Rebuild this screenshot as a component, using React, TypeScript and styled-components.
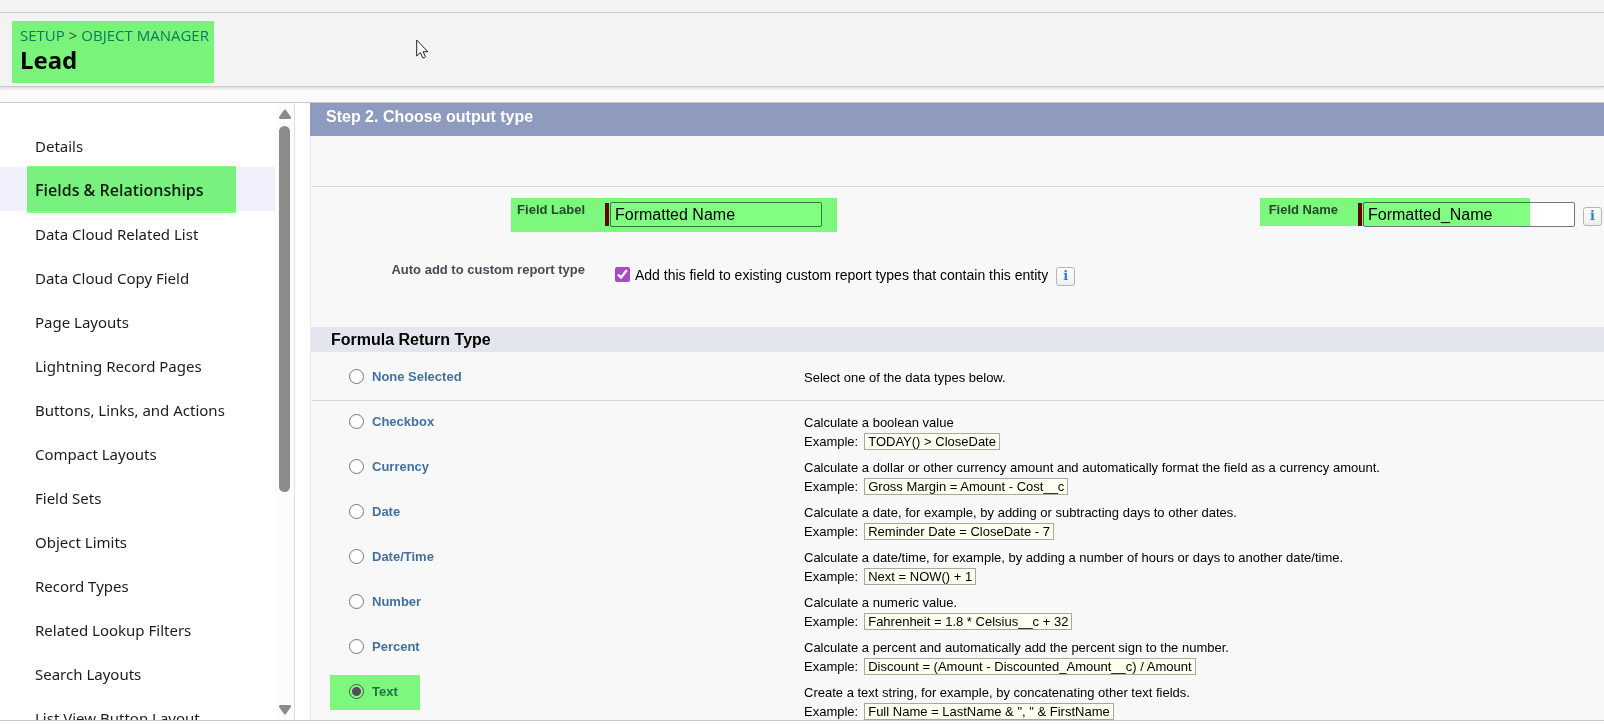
import React from "react";
import styled, { createGlobalStyle, css } from "styled-components";

const GlobalStyle = createGlobalStyle`
  *, *::before, *::after { box-sizing: border-box; }
  html, body, #root { height: 100%; }
  body { margin: 0; background: #fff; font-family: "Liberation Sans", Arial, sans-serif; color: #000; }
`;

const uiFont = `"Noto Sans", "Segoe UI", sans-serif`;
const marker = "#80ff80";

/* Translucent marker strip laid over a part of the page. */
const Marker = styled.span<{ $top: number; $right: number; $bottom: number; $left: number }>`
  position: absolute;
  top: ${(p) => -p.$top}px;
  right: ${(p) => -p.$right}px;
  bottom: ${(p) => -p.$bottom}px;
  left: ${(p) => -p.$left}px;
  background: ${marker};
  mix-blend-mode: multiply;
  pointer-events: none;
`;

const Page = styled.div`
  display: flex;
  flex-direction: column;
  height: 100vh;
  padding-bottom: 3px;
  background: #fff;
`;

const TopStrip = styled.div`
  flex: none;
  height: 12px;
  background: #f3f3f3;
`;

const Header = styled.header`
  position: relative;
  flex: none;
  padding: 8px 12px 3px;
  border: solid #c9c9c9;
  border-width: 1px 0;
  background: #f3f3f3;
  box-shadow: 0 2px 2px rgba(0, 0, 0, 0.1);
  font-family: ${uiFont};
`;

const TitleBlock = styled.div`
  position: relative;
  width: fit-content;
  padding: 4px 5px 8px 8px;
`;

const Breadcrumb = styled.nav`
  display: flex;
  gap: 4px;
  font-family: "Open Sans", "Segoe UI", sans-serif;
  font-size: 15px;
  line-height: 20px;
  color: #555;
  a { color: #0b7cba; text-decoration: none; }
`;

const Title = styled.h1`
  margin: 0;
  font-size: 24px;
  line-height: 30px;
  font-weight: 700;
  color: #080707;
`;

const Pointer = styled.svg`
  position: absolute;
  left: 416px;
  top: 26px;
  width: 13px;
  height: 20px;
`;

const Gap = styled.div`
  flex: none;
  height: 15px;
  background: #fafafa;
`;

const Workspace = styled.div`
  flex: 1;
  min-height: 0;
  display: flex;
  border: solid #c9c9c9;
  border-width: 1px 0;
`;

const Sidebar = styled.aside`
  flex: none;
  width: 295px;
  display: flex;
  overflow: hidden;
  border-right: 1px solid #e0e0e0;
  font-family: ${uiFont};
`;

const SideList = styled.ul`
  flex: 1;
  margin: 0;
  padding: 20px 0 0;
  list-style: none;
`;

const SideItem = styled.li<{ $active?: boolean }>`
  height: 44px;
  padding-left: 35px;
  font-size: 15px;
  line-height: 46px;
  ${(p) => p.$active && css`
    background: #f0f1fd;
    font-family: "Open Sans", "Segoe UI", sans-serif;
    font-size: 16px;
    font-weight: 600;
  `}
`;

const SideLink = styled.a`
  position: relative;
  display: inline-block;
  height: 44px;
  color: #1c1c1c;
  text-decoration: none;
  white-space: nowrap;
`;

const Scrollbar = styled.div`
  flex: none;
  width: 19px;
  padding: 6px 3px 5px 4px;
  display: flex;
  flex-direction: column;
  background: #fcfcfc;
  svg { flex: none; width: 12px; height: 10px; fill: #8b8b8b; }
`;

const Track = styled.div`
  flex: 1;
  padding: 7px 1px 7px 0;
`;

const Thumb = styled.div`
  height: 64%;
  border-radius: 6px;
  background: #8b8b8b;
`;

const Content = styled.main`
  flex: 1;
  min-width: 0;
  margin-left: 15px;
  overflow: hidden;
`;

const StepBar = styled.h2`
  margin: 0;
  height: 33px;
  padding-left: 16px;
  background: #8e9bbe;
  color: #fff;
  font-size: 16px;
  line-height: 28px;
`;

const StepBody = styled.div`
  min-height: 100%;
  border-left: 1px solid #eaeaea;
  background: #f8f8f8;
`;

const ButtonRow = styled.div`
  height: 51px;
  margin-left: 1px;
  border-bottom: 1px solid #d9d9d9;
`;

const FormGrid = styled.div`
  display: grid;
  grid-template-columns: 274px 1fr 274px 266px;
  row-gap: 35px;
  padding: 15px 0 40px;
`;

const FieldName = styled.label`
  text-align: right;
  font-size: 13px;
  line-height: 16px;
  font-weight: 700;
  color: #4a4a56;
  white-space: nowrap;
`;

const FieldCell = styled.div<{ $wide?: boolean }>`
  display: flex;
  align-items: center;
  height: 25px;
  padding-left: 20px;
  font-size: 14px;
  white-space: nowrap;
  ${(p) => p.$wide && css`grid-column: 2 / -1;`}
`;

const LabelText = styled.span`
  position: relative;
`;

const Required = styled.span`
  width: 4px;
  height: 23px;
  margin-right: 1px;
  background: #c00;
`;

const TextBox = styled.input`
  width: 212px;
  height: 25px;
  padding: 0 0 0 4px;
  border: 1px solid #767676;
  border-radius: 2px;
  background: #fff;
  color: #000;
  font: 16px/20px "Liberation Sans", Arial, sans-serif;
`;

const CheckLabel = styled.label`
  display: flex;
  align-items: center;
  gap: 5px;
  padding-left: 10px;
`;

const CheckBox = styled.input`
  width: 15px;
  height: 15px;
  margin: 0;
  accent-color: #a84bc0;
`;

const InfoButton = styled.button`
  flex: none;
  width: 19px;
  height: 19px;
  margin: 3px 0 0 8px;
  padding: 0;
  border: 1px solid #b5b5b5;
  border-radius: 3px;
  background: linear-gradient(#fff, #eee);
  color: #2a7fd6;
  font: 700 13px/16px "DejaVu Serif", serif;
`;

const SectionBand = styled.h3`
  margin: 0;
  height: 25px;
  padding-left: 20px;
  background: #e3e6ef;
  font-size: 16px;
  line-height: 25px;
`;

const Options = styled.div`
  padding-top: 12px;
`;

const Option = styled.div<{ $divided?: boolean }>`
  display: grid;
  grid-template-columns: 493px 1fr;
  height: ${(p) => (p.$divided ? 36 : 45)}px;
`;

const Divider = styled.hr`
  height: 1px;
  margin: 0 0 8px 1px;
  border: 0;
  background: #d9d9d9;
`;

const Choice = styled.div`
  padding: 3px 0 0 38px;
`;

const ChoiceLabel = styled.label`
  position: relative;
  display: inline-flex;
  align-items: center;
  gap: 8px;
  height: 18px;
  font-size: 13px;
  font-weight: 700;
  color: #44709f;
`;

const Radio = styled.input`
  appearance: none;
  width: 15px;
  height: 15px;
  margin: 0;
  border: 1px solid #767676;
  border-radius: 50%;
  background: #fff;
  &:checked {
    border-color: #a84bc0;
    background: radial-gradient(circle, #a84bc0 4px, #fff 5px);
  }
`;

const Description = styled.div`
  padding-top: 4px;
  font-size: 13px;
  line-height: 19px;
  white-space: nowrap;
`;

const Example = styled.div`
  display: flex;
  align-items: center;
  gap: 6px;
  height: 19px;
`;

const Formula = styled.code`
  height: 17px;
  padding: 0 3px;
  border: 1px solid #a8a8a0;
  background: #fffff0;
  font: 13px/15px "Liberation Sans", Arial, sans-serif;
`;

const sideItems = [
  "Details", "Fields & Relationships", "Data Cloud Related List", "Data Cloud Copy Field",
  "Page Layouts", "Lightning Record Pages", "Buttons, Links, and Actions", "Compact Layouts",
  "Field Sets", "Object Limits", "Record Types", "Related Lookup Filters", "Search Layouts",
  "List View Button Layout",
];

const options: { name: string; text: string; example?: string }[] = [
  { name: "None Selected", text: "Select one of the data types below." },
  { name: "Checkbox", text: "Calculate a boolean value", example: "TODAY() > CloseDate" },
  { name: "Currency", text: "Calculate a dollar or other currency amount and automatically format the field as a currency amount.", example: "Gross Margin = Amount - Cost__c" },
  { name: "Date", text: "Calculate a date, for example, by adding or subtracting days to other dates.", example: "Reminder Date = CloseDate - 7" },
  { name: "Date/Time", text: "Calculate a date/time, for example, by adding a number of hours or days to another date/time.", example: "Next = NOW() + 1" },
  { name: "Number", text: "Calculate a numeric value.", example: "Fahrenheit = 1.8 * Celsius__c + 32" },
  { name: "Percent", text: "Calculate a percent and automatically add the percent sign to the number.", example: "Discount = (Amount - Discounted_Amount__c) / Amount" },
  { name: "Text", text: "Create a text string, for example, by concatenating other text fields.", example: 'Full Name = LastName & ", " & FirstName' },
];

export default function App() {
  return (
    <Page>
      <GlobalStyle />
      <TopStrip />
      <Header>
        <TitleBlock>
          <Breadcrumb>
            <a href="#setup">SETUP</a>
            <span>&gt;</span>
            <a href="#object-manager">OBJECT MANAGER</a>
          </Breadcrumb>
          <Title>Lead</Title>
          <Marker $top={0} $right={0} $bottom={0} $left={0} />
        </TitleBlock>
        <Pointer viewBox="0 0 13 20">
          <path d="M.7 1v16l3.600-3.400 2.500 5.200q1.500.600 2.700-1l-2.400-5.100h4.700z" fill="#fff" stroke="#222" strokeWidth="1" strokeLinejoin="round" />
        </Pointer>
      </Header>
      <Gap />
      <Workspace>
        <Sidebar>
          <SideList>
            {sideItems.map((item, i) => (
              <SideItem key={item} $active={i === 1}>
                <SideLink href="#item">
                  {item}
                  {i === 1 && <Marker $top={1} $right={32} $bottom={2} $left={8} />}
                </SideLink>
              </SideItem>
            ))}
          </SideList>
          <Scrollbar>
            <svg viewBox="0 0 12 10"><path d="M5 1Q6 0 7 1l5 7q0 2-1 2H1Q0 10 0 8z" /></svg>
            <Track><Thumb /></Track>
            <svg viewBox="0 0 12 10"><path d="M5 9Q6 10 7 9l5-7q0-2-1-2H1Q0 0 0 2z" /></svg>
          </Scrollbar>
        </Sidebar>
        <Content>
          <StepBar>Step 2. Choose output type</StepBar>
          <StepBody>
            <ButtonRow />
            <FormGrid>
              <FieldName htmlFor="field-label">
                <LabelText>
                  Field Label
                  <Marker $top={4} $right={252} $bottom={15} $left={6} />
                </LabelText>
              </FieldName>
              <FieldCell>
                <Required />
                <TextBox id="field-label" defaultValue="Formatted Name" />
              </FieldCell>
              <FieldName htmlFor="field-name">
                <LabelText>
                  Field Name
                  <Marker $top={4} $right={192} $bottom={9} $left={9} />
                </LabelText>
              </FieldName>
              <FieldCell>
                <Required />
                <TextBox id="field-name" defaultValue="Formatted_Name" />
                <InfoButton aria-label="Field name help">i</InfoButton>
              </FieldCell>
              <FieldName htmlFor="auto-add">Auto add to custom report type</FieldName>
              <FieldCell $wide>
                <CheckLabel>
                  <CheckBox id="auto-add" type="checkbox" defaultChecked />
                  Add this field to existing custom report types that contain this entity
                </CheckLabel>
                <InfoButton aria-label="Report type help">i</InfoButton>
              </FieldCell>
            </FormGrid>
            <SectionBand>Formula Return Type</SectionBand>
            <Options>
              {options.map((o, i) => (
                <React.Fragment key={o.name}>
                  <Option $divided={i === 0}>
                    <Choice>
                      <ChoiceLabel>
                        <Radio type="radio" name="return-type" defaultChecked={o.name === "Text"} />
                        {o.name}
                        {o.name === "Text" && <Marker $top={7} $right={22} $bottom={10} $left={19} />}
                      </ChoiceLabel>
                    </Choice>
                    <Description>
                      {o.text}
                      {o.example && <Example>Example: <Formula>{o.example}</Formula></Example>}
                    </Description>
                  </Option>
                  {i === 0 && <Divider />}
                </React.Fragment>
              ))}
            </Options>
          </StepBody>
        </Content>
      </Workspace>
    </Page>
  );
}
